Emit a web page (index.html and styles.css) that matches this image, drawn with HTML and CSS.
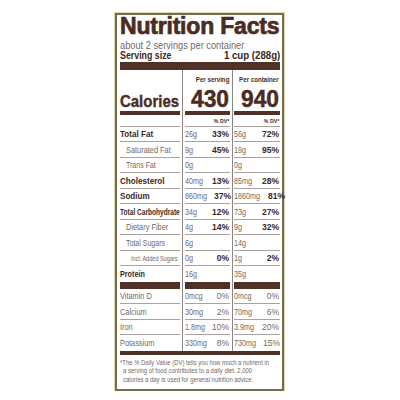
FILE: index.html
```html
<!DOCTYPE html>
<html>
<head>
    <title>Nutrition Facts</title>
    <link rel="stylesheet" href="styles.css">
</head>
<body>
<div class="label">
    <h1 class="title">Nutrition Facts</h1>
    <p class="servings"><span class="sq">about 2 servings per container</span></p>
    <p class="size"><span class="sq">Serving size</span><span class="sq rt">1 cup (288g)</span></p>
    <div class="bar"></div>

    <div class="facts">
        <div class="c l nr cal-label"><span class="sq">Calories</span></div>
        <div class="c a nr cal"><span class="per sq rt">Per serving</span><span class="kcal sq rt">430</span></div>
        <div class="c b nr cal"><span class="per sq rt">Per container</span><span class="kcal sq rt">940</span></div>

        <div class="c l thick t4"></div>
        <div class="c a thick t4"></div>
        <div class="c b thick t4"></div>

        <div class="c l dv"></div>
        <div class="c a dv"><span class="sq rt">% DV*</span></div>
        <div class="c b dv"><span class="sq rt">% DV*</span></div>

        <div class="c l r"><b class="sq">Total Fat</b></div>
        <div class="c a r"><span class="sq amt">26g</span><b class="sq rt">33%</b></div>
        <div class="c b r"><span class="sq amt">56g</span><b class="sq rt">72%</b></div>

        <div class="c l r sub"><span class="sq">Saturated Fat</span></div>
        <div class="c a r"><span class="sq amt">9g</span><b class="sq rt">45%</b></div>
        <div class="c b r"><span class="sq amt">19g</span><b class="sq rt">95%</b></div>

        <div class="c l r sub"><span class="sq trans">Trans Fat</span></div>
        <div class="c a r"><span class="sq amt">0g</span></div>
        <div class="c b r"><span class="sq amt">0g</span></div>

        <div class="c l r"><b class="sq">Cholesterol</b></div>
        <div class="c a r"><span class="sq amt">40mg</span><b class="sq rt">13%</b></div>
        <div class="c b r"><span class="sq amt">85mg</span><b class="sq rt">28%</b></div>

        <div class="c l r"><b class="sq">Sodium</b></div>
        <div class="c a r"><span class="sq amt">860mg</span><b class="sq rt">37%</b></div>
        <div class="c b r"><span class="sq amt">1860mg</span><b class="sq rt">81%</b></div>

        <div class="c l r"><b class="sq carb">Total Carbohydrate</b></div>
        <div class="c a r"><span class="sq amt">34g</span><b class="sq rt">12%</b></div>
        <div class="c b r"><span class="sq amt">73g</span><b class="sq rt">27%</b></div>

        <div class="c l r sub"><span class="sq">Dietary Fiber</span></div>
        <div class="c a r"><span class="sq amt">4g</span><b class="sq rt">14%</b></div>
        <div class="c b r"><span class="sq amt">9g</span><b class="sq rt">32%</b></div>

        <div class="c l r sub"><span class="sq sugars">Total Sugars</span></div>
        <div class="c a r"><span class="sq amt">6g</span></div>
        <div class="c b r"><span class="sq amt">14g</span></div>

        <div class="c l r sub2"><span class="sq added">Incl. Added Sugars</span></div>
        <div class="c a r"><span class="sq amt">0g</span><b class="sq rt">0%</b></div>
        <div class="c b r"><span class="sq amt">1g</span><b class="sq rt">2%</b></div>

        <div class="c l r nr"><b class="sq protein">Protein</b></div>
        <div class="c a r nr"><span class="sq amt">16g</span></div>
        <div class="c b r nr"><span class="sq amt">35g</span></div>

        <div class="c l thick t7"></div>
        <div class="c a thick t7"></div>
        <div class="c b thick t7"></div>

        <div class="c l r"><span class="sq">Vitamin D</span></div>
        <div class="c a r"><span class="sq amt">0mcg</span><span class="sq rt">0%</span></div>
        <div class="c b r"><span class="sq amt">0mcg</span><span class="sq rt">0%</span></div>

        <div class="c l r"><span class="sq">Calcium</span></div>
        <div class="c a r"><span class="sq amt">30mg</span><span class="sq rt">2%</span></div>
        <div class="c b r"><span class="sq amt">70mg</span><span class="sq rt">6%</span></div>

        <div class="c l r"><span class="sq">Iron</span></div>
        <div class="c a r"><span class="sq amt">1.8mg</span><span class="sq rt">10%</span></div>
        <div class="c b r"><span class="sq amt">3.9mg</span><span class="sq rt">20%</span></div>

        <div class="c l r nr"><span class="sq">Potassium</span></div>
        <div class="c a r nr"><span class="sq amt">330mg</span><span class="sq rt">8%</span></div>
        <div class="c b r nr"><span class="sq amt">730mg</span><span class="sq rt">15%</span></div>
    </div>

    <div class="bar end"></div>

    <p class="note">
        <span class="sq">*The % Daily Value (DV) tells you how much a nutrient in</span><br>
        <span class="sq ind">a serving of food contributes to a daily diet. 2,000</span><br>
        <span class="sq ind">calories a day is used for general nutrition advice.</span>
    </p>
</div>
</body>
</html>
```

FILE: styles.css
```css
body{
    margin:0;
    background:#fff;
    font-family:"Liberation Sans", Arial, sans-serif;
    color:#736964;
}
.label{
    width:160px;
    margin:13px 0 0 115px;
    padding:1px 2px 5px 3px;
    border:2px solid #746d4a;
    box-shadow:0 0 0 1px #dcd7b8;
}
.sq{
    display:inline-block;
    white-space:nowrap;
    transform:scaleX(var(--s, .82));
    transform-origin:0 50%;
}
.sq.rt{
    transform-origin:100% 50%;
}
.title{
    margin:0;
    font-size:23px;
    line-height:20px;
    font-weight:bold;
    color:#4a2c23;
    -webkit-text-stroke:.7px #4a2c23;
    letter-spacing:-.2px;
    white-space:nowrap;
}
.servings{
    margin:4px 0 0;
    font-size:10.5px;
    line-height:10px;
    --s:.88;
}
.size{
    margin:0;
    display:flex;
    justify-content:space-between;
    font-size:10.5px;
    line-height:10px;
    font-weight:bold;
    color:#3d2822;
}
.size .sq{ --s:.84; }
.size .rt{ --s:.92; }
.bar{
    height:8px;
    margin-top:2px;
    background:#4f3128;
}
.bar.end{
    height:4px;
    margin-top:0;
}

.facts{
    display:grid;
    grid-template-columns:62px 50px 48px;
}
.c{
    position:relative;
}
.c::after{
    content:"";
    position:absolute;
    bottom:0;
    height:1px;
    background:#aaa29e;
}
.l::after{ left:0; right:2px; }
.a{
    border-left:1px solid #8e8682;
    padding:0 3px 0 2px;
}
.a::after{ left:2px; right:2px; }
.b{
    border-left:1px solid #8e8682;
    padding:0 1px 0 1px;
}
.b::after{ left:1px; right:0; }
.nr::after{ display:none; }

.cal{
    height:41px;
    display:flex;
    flex-direction:column;
    align-items:flex-end;
    color:#4a2c23;
    font-weight:bold;
}
.per{
    margin-top:6px;
    font-size:6.5px;
    line-height:8px;
    --s:.88;
}
.kcal{
    margin-top:4px;
    font-size:24px;
    line-height:22px;
    --s:.9;
    -webkit-text-stroke:.5px #4a2c23;
}
.cal-label{
    display:flex;
    align-items:flex-end;
    padding-bottom:1px;
    font-size:17px;
    line-height:17px;
    font-weight:bold;
    color:#4a2c23;
    -webkit-text-stroke:.4px #4a2c23;
}
.cal-label .sq{ --s:.88; }
.thick::after{
    top:0;
    height:auto;
    background:#4f3128;
}
.t4{ height:4px; }
.t7{ height:7px; }

.dv{
    height:11.5px;
    display:flex;
    justify-content:flex-end;
    align-items:center;
    font-size:5.5px;
    font-weight:bold;
    color:#3d2822;
}
.r{
    height:15.5px;
    display:flex;
    align-items:center;
    justify-content:space-between;
    font-size:9px;
}
.r b{
    color:#3d2822;
}
.l.r b{ --s:.9; }
.l.r b.carb{ --s:.73; }
.l.r b.protein{ --s:.8; }
.sub{ padding-left:6px; }
.sub .trans, .sub .sugars{ --s:.78; }
.sub2{ padding-left:11px; }
.sub2 .added{ font-size:7.5px; --s:.74; }
.r .amt{ --s:.8; }
.a .rt, .b .rt{ --s:.95; }

.note{
    margin:0;
    padding-top:4px;
    font-size:7.5px;
    line-height:8.5px;
    --s:.79;
}
.note .ind{ margin-left:3px; }
```
